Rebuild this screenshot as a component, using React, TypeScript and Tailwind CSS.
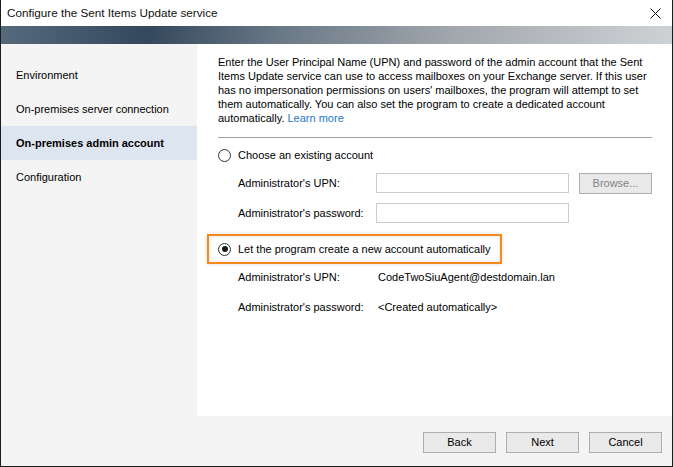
import type { ReactNode } from "react";

const font = { fontFamily: '"Liberation Sans", Arial, sans-serif' };

const steps = [
  "Environment",
  "On-premises server connection",
  "On-premises admin account",
  "Configuration",
];

const Radio = ({ checked }: { checked?: boolean }) => (
  <span className="flex h-[13px] w-[13px] shrink-0 items-center justify-center rounded-full border border-[#333333] bg-white">
    {checked && <span className="h-[6px] w-[6px] rounded-full bg-[#1a1a1a]" />}
  </span>
);

const FieldRow = ({ label, children }: { label: string; children: ReactNode }) => (
  <div className="flex h-[20px] items-center pl-[20px]">
    <span className="w-[138px] shrink-0">{label}</span>
    {children}
  </div>
);

const Button = ({ children, disabled }: { children: ReactNode; disabled?: boolean }) => (
  <button
    className={`flex h-[21px] w-[73px] items-center justify-center border border-[#adadad] bg-[#e9e9e9] text-[11px] ${
      disabled ? "text-[#838383]" : "text-black"
    }`}
  >
    {children}
  </button>
);

export default function App() {
  return (
    <div
      className="flex h-[467px] w-[673px] flex-col border-x border-b border-[#1c1c1c] bg-white text-[11px] text-black"
      style={font}
    >
      {/* title bar */}
      <div className="flex h-[26px] shrink-0 items-center justify-between pl-[6px] pr-[10px]">
        <span className="text-[11.7px] text-[#111]">Configure the Sent Items Update service</span>
        <svg width="11" height="11" viewBox="0 0 11 11" className="mr-[1px]">
          <path d="M0.5 0.5 L10.5 10.5 M10.5 0.5 L0.5 10.5" stroke="#111" strokeWidth="1" />
        </svg>
      </div>

      {/* banner */}
      <div className="h-[18px] shrink-0 bg-[linear-gradient(100deg,#566a7e_0%,#34485d_22%,#6b7987_42%,#a3a8ae_68%,#cfd2d5_100%)]" />

      <div className="flex min-h-0 flex-1">
        {/* sidebar */}
        <div className="w-[196px] shrink-0 bg-[#f4f4f4] pt-[14px]">
          {steps.map((s, i) => (
            <div
              key={s}
              className={`flex h-[34px] items-center pl-[15px] ${
                i === 2 ? "bg-[#dde5f1] font-bold" : ""
              }`}
            >
              {s}
            </div>
          ))}
        </div>

        {/* content */}
        <div className="flex-1 pl-[21px] pr-[20px] pt-[11px]">
          <p className="leading-[14px]">
            <span>
              Enter the User Principal Name (UPN) and password of the admin account that the Sent
              Items Update service can use to access mailboxes on your Exchange server. If this user
              has no impersonation permissions on users' mailboxes, the program will attempt to set
              them automatically. You can also set the program to create a dedicated account
              automatically.
            </span>{" "}
            <span className="text-[#1e78c8]">Learn more</span>
          </p>
          <div className="mt-[12px] h-px bg-[#a0a0a0]" />

          <div className="mt-[9px] flex h-[16px] items-center gap-[7px]">
            <Radio />
            <span>Choose an existing account</span>
          </div>

          <div className="mt-[10px] flex flex-col gap-[10px]">
            <FieldRow label="Administrator's UPN:">
              <div className="h-[20px] w-[193px] border border-[#cdcdcd] bg-white" />
              <div className="ml-[10px]">
                <Button disabled>Browse...</Button>
              </div>
            </FieldRow>
            <FieldRow label="Administrator's password:">
              <div className="h-[20px] w-[193px] border border-[#cdcdcd] bg-white" />
            </FieldRow>
          </div>

          <div className="mt-[18px] flex">
            <div className="relative flex h-[16px] items-center gap-[7px]">
              <span className="absolute -bottom-[7px] -left-[11px] -right-[11px] -top-[7px] border-2 border-[#f48a1c] shadow-[inset_0_0_4px_rgba(0,0,0,0.12),0_0_4px_rgba(0,0,0,0.15)]" />
              <Radio checked />
              <span>Let the program create a new account automatically</span>
            </div>
          </div>

          <div className="mt-[10px] flex flex-col gap-[10px]">
            <FieldRow label="Administrator's UPN:">
              <span className="pl-[2px]">CodeTwoSiuAgent@destdomain.lan</span>
            </FieldRow>
            <FieldRow label="Administrator's password:">
              <span className="pl-[2px]">&lt;Created automatically&gt;</span>
            </FieldRow>
          </div>
        </div>
      </div>

      {/* footer */}
      <div className="flex h-[50px] shrink-0 justify-end gap-[10px] bg-[#f4f4f4] pr-[10px] pt-[16px]">
        <Button>Back</Button>
        <Button>Next</Button>
        <Button>Cancel</Button>
      </div>
    </div>
  );
}
